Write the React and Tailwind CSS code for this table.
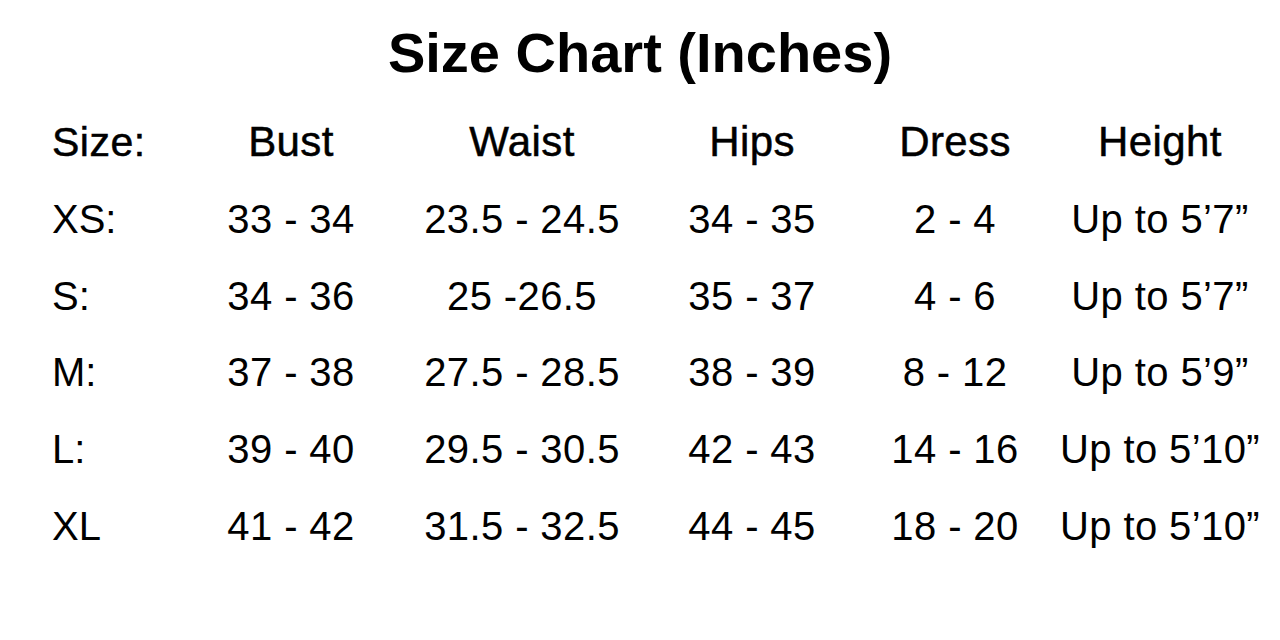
import React from "react";

const headers = ["Bust", "Waist", "Hips", "Dress", "Height"];

const rows = [
  { size: "XS:", values: ["33 - 34", "23.5 - 24.5", "34 - 35", "2 - 4", "Up to 5’7”"] },
  { size: "S:", values: ["34 - 36", "25 -26.5", "35 - 37", "4 - 6", "Up to 5’7”"] },
  { size: "M:", values: ["37 - 38", "27.5 - 28.5", "38 - 39", "8 - 12", "Up to 5’9”"] },
  { size: "L:", values: ["39 - 40", "29.5 - 30.5", "42 - 43", "14 - 16", "Up to 5’10”"] },
  { size: "XL", values: ["41 - 42", "31.5 - 32.5", "44 - 45", "18 - 20", "Up to 5’10”"] },
];

const App = () => {
  return (
    <div className="w-[1280px] h-[640px] bg-white text-black font-['Liberation_Sans',Arial,sans-serif] pt-[25px]">
      <h1 className="text-center text-[56px] leading-[56px] font-bold">
        Size Chart (Inches)
      </h1>

      <div className="mt-[23px] pl-[52px] grid grid-cols-[124px_230px_232px_228px_178px_232px] auto-rows-[76.75px]">
        {/* Header row */}
        <div className="text-[41px] leading-[76.75px] tracking-[0.5px] [-webkit-text-stroke:0.5px_black] whitespace-nowrap">
          Size:
        </div>
        {headers.map((h) => (
          <div
            key={h}
            className="text-center text-[42px] leading-[76.75px] tracking-[0.4px] [-webkit-text-stroke:0.5px_black] whitespace-nowrap"
          >
            {h}
          </div>
        ))}

        {/* Data rows */}
        {rows.map((row) => (
          <React.Fragment key={row.size}>
            <div className="text-[40px] leading-[76.75px] whitespace-nowrap">{row.size}</div>
            {row.values.map((v, i) => (
              <div
                key={i}
                className="text-center text-[40px] leading-[76.75px] tracking-[0.4px] whitespace-nowrap"
              >
                {v}
              </div>
            ))}
          </React.Fragment>
        ))}
      </div>
    </div>
  );
};

export default App;
